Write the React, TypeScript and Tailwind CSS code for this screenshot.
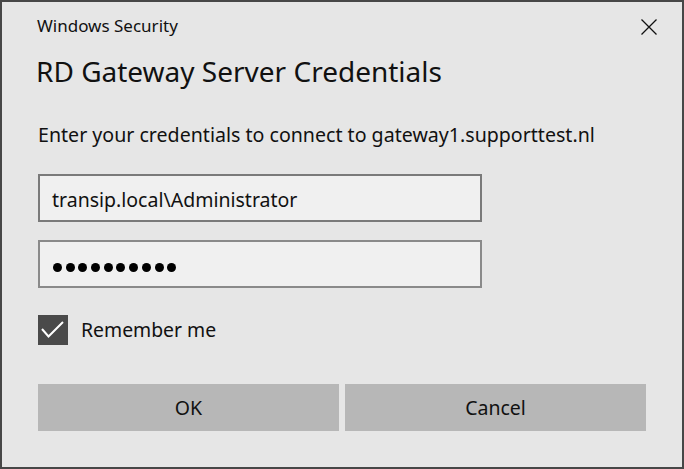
const font = { fontFamily: '"Noto Sans", "Open Sans", sans-serif' }

export default function App() {
  return (
    <div
      className="w-[684px] h-[469px] bg-[#e6e6e6] border-2 border-[#474747] text-[#111] flex flex-col"
      style={font}
    >
      {/* Title bar */}
      <div className="flex items-start justify-between pl-[35px] pr-[25px] pt-[13px]">
        <span className="text-[17px] leading-[22px]">Windows Security</span>
        <button className="mt-[4px]">
          <svg width="16" height="16" viewBox="0 0 16 16" fill="none" stroke="#111" strokeWidth="1.3">
            <path d="M0.5 0.5 15.5 15.5M15.5 0.5 0.5 15.5" />
          </svg>
        </button>
      </div>

      {/* Heading */}
      <h1 className="pl-[34px] mt-[17px] text-[28px] leading-[34px]">
        RD Gateway Server Credentials
      </h1>

      <div className="pl-[36px] pr-[36px] mt-[34px] flex flex-col">
        <p className="text-[19.6px] leading-[26px]">
          Enter your credentials to connect to gateway1.supporttest.nl
        </p>

        {/* Username */}
        <div className="mt-[26px] w-[444px] h-[48px] border-2 border-[#7a7a7a] bg-[#f0f0f0] flex items-center pl-[12px] pt-[3px]">
          <span className="text-[19.5px] leading-[24px]">transip.local\Administrator</span>
        </div>

        {/* Password */}
        <div className="mt-[18px] w-[444px] h-[48px] border-2 border-[#8a8a8a] bg-[#f0f0f0] flex items-center pl-[13px] pt-[7px] gap-[3.7px]">
          {Array.from({ length: 10 }).map((_, i) => (
            <span key={i} className="w-[9px] h-[9px] rounded-full bg-[#000]" />
          ))}
        </div>

        {/* Remember me */}
        <label className="mt-[27px] flex items-center gap-[13px]">
          <span className="w-[30px] h-[30px] bg-[#4a4a4a]">
            <svg width="30" height="30" viewBox="0 0 30 30" fill="none" stroke="#fff" strokeWidth="2">
              <polyline points="4,14 10.5,21.5 25,7" />
            </svg>
          </span>
          <span className="text-[19.4px] leading-[24px]">Remember me</span>
        </label>

        {/* Buttons */}
        <div className="mt-[39px] flex gap-[6px]">
          <button className="w-[301px] h-[47px] bg-[#b7b7b7] text-[19.5px]">OK</button>
          <button className="w-[301px] h-[47px] bg-[#b7b7b7] text-[19.5px]">Cancel</button>
        </div>
      </div>
    </div>
  )
}
